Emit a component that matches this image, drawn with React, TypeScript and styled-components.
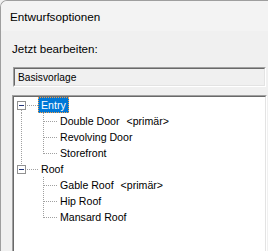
import React from "react";
import styled, { createGlobalStyle } from "styled-components";

const Global = createGlobalStyle`
  html, body { margin: 0; padding: 0; overflow: hidden; background: #f0f0f0; }
  body { width: 268px; height: 251px; }
`;

const Window = styled.div`
  width: 268px;
  height: 251px;
  box-sizing: border-box;
  border-top: 1px solid #9e9e9e;
  border-left: 1px solid #9e9e9e;
  border-top-left-radius: 7px;
  background: #f0f0f0;
  overflow: hidden;
  display: flex;
  flex-direction: column;
  font-family: "Liberation Sans", Arial, sans-serif;
  color: #000;
`;

const TitleBar = styled.div`
  height: 30px;
  flex: none;
  display: flex;
  align-items: center;
  padding-left: 9px;
  background: #f3f3f3;
  font-size: 11.7px;
`;

const Body = styled.div`
  display: flex;
  flex-direction: column;
  padding: 11px 0 0 11px;
`;

const Label = styled.div`
  font-size: 11.6px;
  line-height: 14px;
  height: 14px;
`;

const Combo = styled.div`
  margin: 11px 0 0 1px;
  width: 253px;
  height: 20px;
  box-sizing: border-box;
  border-style: solid;
  border-width: 1px;
  border-color: #a0a0a0 #ffffff #ffffff #a0a0a0;
  background: #f0f0f0;
  display: flex;
`;

const ComboInner = styled.div`
  flex: 1;
  border-style: solid;
  border-width: 1px;
  border-color: #696969 #e3e3e3 #e3e3e3 #696969;
  display: flex;
  align-items: center;
  padding-left: 3px;
  font-size: 10.2px;
`;

const TreeBox = styled.div`
  margin-top: 8px;
  width: 255px;
  height: 200px;
  box-sizing: border-box;
  border-style: solid;
  border-width: 1px;
  border-color: #a0a0a0 #ffffff #ffffff #a0a0a0;
  display: flex;
`;

const TreeInner = styled.div`
  flex: 1;
  border-style: solid;
  border-width: 1px;
  border-color: #696969 #e3e3e3 #e3e3e3 #696969;
  background: #fff;
  display: flex;
  flex-direction: column;
`;

const Row = styled.div`
  height: 16px;
  display: flex;
  align-items: stretch;
`;

const NodeLabel = styled.span<{ $selected?: boolean }>`
  display: flex;
  align-items: center;
  box-sizing: border-box;
  height: 16px;
  padding: 0 2px;
  border: 1px dotted ${(p) => (p.$selected ? "#f5a04a" : "transparent")};
  background: ${(p) => (p.$selected ? "#0078d7" : "transparent")};
  color: ${(p) => (p.$selected ? "#fff" : "#000")};
  font-size: 10.6px;
  white-space: pre;
`;

const Tag = styled.span`
  margin-left: 7px;
`;

const LINE = "#a0a0a0";

function RootGutter({ prev, next }: { prev: boolean; next: boolean }) {
  return (
    <svg width="24" height="16" style={{ flex: "none", display: "block" }}>
      {prev && <line x1="7.5" y1="0" x2="7.5" y2="4" stroke={LINE} strokeDasharray="1 1" />}
      {next && <line x1="7.5" y1="13" x2="7.5" y2="16" stroke={LINE} strokeDasharray="1 1" />}
      <line x1="13" y1="8.5" x2="24" y2="8.5" stroke={LINE} strokeDasharray="1 1" />
      <rect x="3.5" y="4.5" width="8" height="8" fill="#fff" stroke="#919191" />
      <line x1="5" y1="8.5" x2="10" y2="8.5" stroke="#24367a" />
    </svg>
  );
}

function ChildGutter({ parentNext, last }: { parentNext: boolean; last: boolean }) {
  return (
    <svg width="43" height="16" style={{ flex: "none", display: "block" }}>
      {parentNext && <line x1="7.5" y1="0" x2="7.5" y2="16" stroke={LINE} strokeDasharray="1 1" />}
      <line x1="29.5" y1="0" x2="29.5" y2={last ? 9 : 16} stroke={LINE} strokeDasharray="1 1" />
      <line x1="30" y1="8.5" x2="43" y2="8.5" stroke={LINE} strokeDasharray="1 1" />
    </svg>
  );
}

type Child = { name: string; primary?: boolean };
type Node = { name: string; selected?: boolean; children: Child[] };

const tree: Node[] = [
  {
    name: "Entry",
    selected: true,
    children: [{ name: "Double Door", primary: true }, { name: "Revolving Door" }, { name: "Storefront" }],
  },
  {
    name: "Roof",
    children: [{ name: "Gable Roof", primary: true }, { name: "Hip Roof" }, { name: "Mansard Roof" }],
  },
];

export default function App() {
  return (
    <>
      <Global />
      <Window>
        <TitleBar>Entwurfsoptionen</TitleBar>
        <Body>
          <Label>Jetzt bearbeiten:</Label>
          <Combo>
            <ComboInner>Basisvorlage</ComboInner>
          </Combo>
          <TreeBox>
            <TreeInner>
              {tree.map((n, i) => {
                const next = i < tree.length - 1;
                return (
                  <React.Fragment key={n.name}>
                    <Row>
                      <RootGutter prev={i > 0} next={next} />
                      <NodeLabel $selected={n.selected}>{n.name}</NodeLabel>
                    </Row>
                    {n.children.map((c, j) => (
                      <Row key={c.name}>
                        <ChildGutter parentNext={next} last={j === n.children.length - 1} />
                        <NodeLabel>
                          {c.name}
                          {c.primary && <Tag>&lt;primär&gt;</Tag>}
                        </NodeLabel>
                      </Row>
                    ))}
                  </React.Fragment>
                );
              })}
            </TreeInner>
          </TreeBox>
        </Body>
      </Window>
    </>
  );
}
